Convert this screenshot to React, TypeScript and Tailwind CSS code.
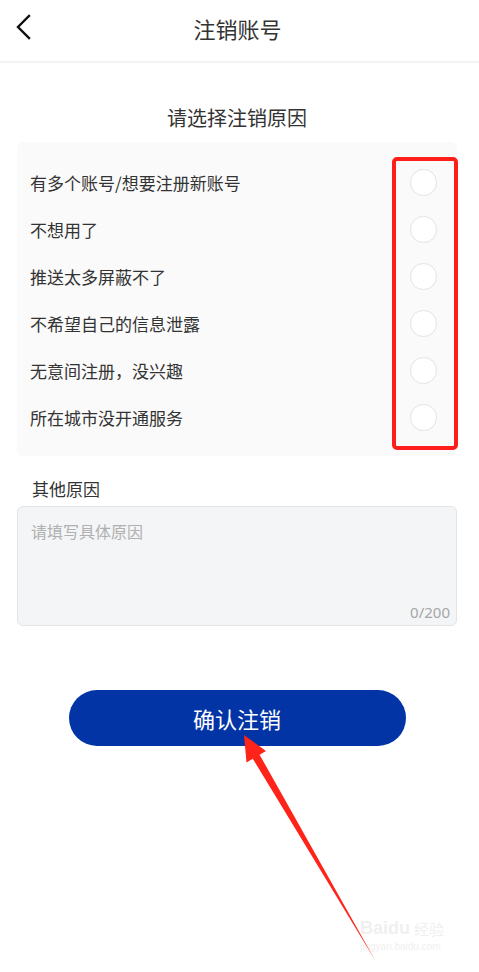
import React from "react";

const reasons = [
  "有多个账号/想要注册新账号",
  "不想用了",
  "推送太多屏蔽不了",
  "不希望自己的信息泄露",
  "无意间注册，没兴趣",
  "所在城市没开通服务",
];

export default function App() {
  return (
    <div
      className="relative w-[479px] h-[972px] bg-white overflow-hidden text-[#333333]"
      style={{ fontFamily: '"Noto Sans CJK SC", "Noto Sans", sans-serif' }}
    >
      {/* Header */}
      <div className="h-[63px] border-b-[2px] border-[#f4f4f4]">
        <div className="relative h-[56px] flex items-center justify-center">
          <svg
            className="absolute left-[15px] top-[14px]"
            width="18"
            height="26"
            viewBox="0 0 18 26"
            fill="none"
          >
            <path d="M14 2 L3 13 L14 24" stroke="#111" strokeWidth="2.4" strokeLinecap="square" />
          </svg>
          <span className="pr-[4px] text-[22px] leading-[30px] text-[#333]">注销账号</span>
        </div>
      </div>

      <div className="pl-[17px] pr-[22px]">
        <div className="mt-[41px] text-center text-[20px] leading-[28px] text-[#333]">
          请选择注销原因
        </div>

        {/* Reasons card */}
        <div className="mt-[10px] bg-[#fafafa] rounded-[6px] pt-[17px] pb-[15px]">
          {reasons.map((r) => (
            <div key={r} className="h-[47px] flex items-center justify-between pl-[13px] pr-[20px]">
              <span className="text-[17px] leading-[24px] text-[#333]">{r}</span>
              <span className="w-[27px] h-[27px] rounded-full bg-white border border-[#e6e6e6] shadow-[0_0_1px_rgba(0,0,0,0.05)]" />
            </div>
          ))}
        </div>

        <div className="mt-[21px] pl-[15px] text-[17px] leading-[24px] text-[#333]">其他原因</div>

        <div className="mt-[5px] h-[120px] rounded-[6px] border border-[#e4e4e4] bg-[#f4f5f7] flex flex-col justify-between pl-[13px] pr-[6px] pt-[12px] pb-[3px]">
          <span className="text-[16px] leading-[24px] text-[#b0b0b0]">请填写具体原因</span>
          <span
            className="self-end text-[15px] leading-[20px] text-[#a6a6a6]"
            style={{ fontFamily: '"Noto Sans", sans-serif' }}
          >
            0/200
          </span>
        </div>

        <div className="mt-[64px] flex justify-center">
          <button className="w-[337px] h-[56px] rounded-full bg-[#0234a6] text-white text-[22px] leading-[30px]">
            确认注销
          </button>
        </div>
      </div>

      {/* Red annotation box */}
      <div className="absolute left-[392px] top-[157px] w-[66px] h-[293px] border-[4px] border-[#ff1f1a] rounded-[5px]" />

      {/* Watermark */}
      <div className="absolute left-[360px] top-[918px] flex flex-col items-start select-none">
        <div className="flex items-end gap-[4px]">
          <span
            className="text-[18px] leading-[20px] font-bold text-[#f0f0f0]"
            style={{ fontFamily: '"Liberation Sans", sans-serif' }}
          >
            Baidu
          </span>
          <span className="text-[15px] leading-[18px] text-[#f0f0f0]">经验</span>
        </div>
        <span
          className="mt-[3px] text-[10px] leading-[12px] text-[#f0f0f0]"
          style={{ fontFamily: '"Liberation Sans", sans-serif' }}
        >
          jingyan.baidu.com
        </span>
      </div>

      {/* Red arrow */}
      <svg className="absolute left-0 top-0 pointer-events-none" width="479" height="972">
        <polygon
          points="244,735 266,751 259.6,754.7 375,960 252.8,758.7 246.5,762.5"
          fill="#ff2419"
        />
      </svg>
    </div>
  );
}
